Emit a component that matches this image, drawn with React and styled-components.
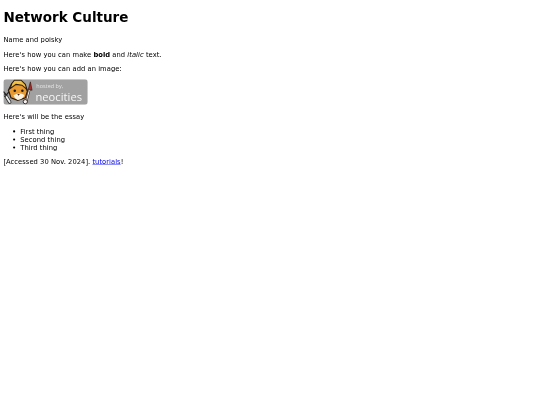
import React from "react";
import styled, { createGlobalStyle } from "styled-components";

const Global = createGlobalStyle`
  html { background: #fff; }
  body { margin: 0; }
`;

const Page = styled.main`
  display: flow-root;
  box-sizing: border-box;
  width: 1280px;
  padding: 0 8px;
  transform: scale(0.421875);
  transform-origin: 0 0;
  filter: blur(0.4px);
  font-family: "DejaVu Sans", sans-serif;
  font-size: 16px;
  letter-spacing: 0.09px;
  color: #000;
`;

const Title = styled.h1`
  font-size: 32px;
  font-weight: bold;
  letter-spacing: 0;
  margin: 21.44px 0 25.2px;
`;

const Para = styled.p`
  margin: 15.5px 0;
`;

const Essay = styled(Para)`
  margin-top: 18.3px;
`;

const List = styled.ul`
  margin: 17px 0 10px;
  padding-left: 40px;
`;

const Closing = styled.p`
  margin: 13.2px 0 15.5px;
`;

const Link = styled.a`
  color: #0000ee;
  text-decoration: underline;
`;

const Badge = styled.svg`
  display: block;
  width: 200px;
  height: 60px;
`;

const NeoBadge = () => (
  <Badge viewBox="0 0 200 60" role="img" aria-label="hosted by neocities">
    <rect x="0" y="0" width="200" height="60" rx="7" fill="#a1a1a1" />
    <path d="M5 38 L15 54" stroke="#222" strokeWidth="8" strokeLinecap="round" />
    <path d="M5 38 L15 54" stroke="#eee" strokeWidth="4.5" strokeLinecap="round" />
    <path d="M13 30 L5 40 M1 30 L7 38" stroke="#222" strokeWidth="3" strokeLinecap="round" />
    <path d="M12 26 L20 10 L36 6 L50 14 L57 28 L52 44 L34 50 L18 44Z" fill="#e89a32" stroke="#2c1c10" strokeWidth="3" />
    <path d="M20 10 L26 2 L42 2 L52 12 L56 24 L44 14 L30 12 L16 22Z" fill="#f2c23e" stroke="#2c1c10" strokeWidth="2.5" />
    <path d="M24 38 Q36 30 50 37 Q46 48 34 49 Q26 46 24 38Z" fill="#fbf3e0" />
    <circle cx="27" cy="27" r="3" fill="#1a1a1a" />
    <circle cx="45" cy="27" r="3" fill="#1a1a1a" />
    <path d="M33 35 L39 35 L36 39Z" fill="#402015" />
    <path d="M54 54 L62 24" stroke="#2c1c10" strokeWidth="5" />
    <path d="M54 54 L62 24" stroke="#eee" strokeWidth="2.5" />
    <path d="M59 24 L64 6 L68 26Z" fill="#a82a2a" stroke="#2c1c10" strokeWidth="1.5" />
    <circle cx="52" cy="53" r="5" fill="#f2f2f2" stroke="#2c1c10" strokeWidth="2" />
    <text x="78" y="21" fontFamily="'Open Sans', sans-serif" fontSize="13" fill="#e6e6e6">hosted by,</text>
    <text x="76" y="52" fontFamily="'Open Sans', sans-serif" fontSize="26.5" fill="#f6f6f6">neocities</text>
  </Badge>
);

export default function App() {
  return (
    <>
      <Global />
      <Page>
        <Title>Network Culture</Title>
        <Para>Name and poisky</Para>
        <Para>
          Here's how you can make <strong>bold</strong> and <em>italic</em> text.
        </Para>
        <Para>Here's how you can add an image:</Para>
        <NeoBadge />
        <Essay>Here's will be the essay</Essay>
        <List>
          <li>First thing</li>
          <li>Second thing</li>
          <li>Third thing</li>
        </List>
        <Closing>
          [Accessed 30 Nov. 2024]. <Link href="#">tutorials</Link>!
        </Closing>
      </Page>
    </>
  );
}
